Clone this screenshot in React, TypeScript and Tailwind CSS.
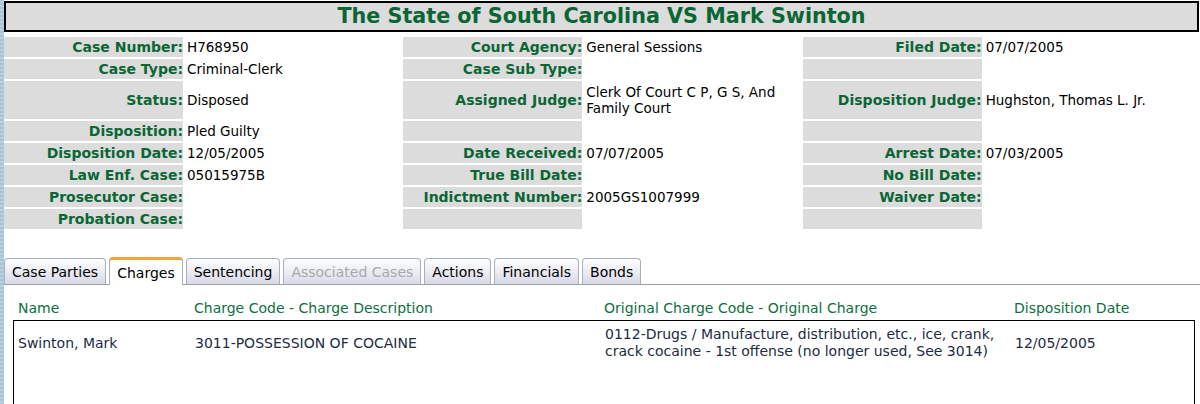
const font = "font-['DejaVu_Sans','Verdana',sans-serif]"

type Cell = { label?: string; value?: string }

const rows: { h: string; cells: Cell[] }[] = [
  { h: "h-[20px]", cells: [{ label: "Case Number:", value: "H768950" }, { label: "Court Agency:", value: "General Sessions" }, { label: "Filed Date:", value: "07/07/2005" }] },
  { h: "h-[20px]", cells: [{ label: "Case Type:", value: "Criminal-Clerk" }, { label: "Case Sub Type:" }, {}] },
  { h: "h-[38px]", cells: [{ label: "Status:", value: "Disposed" }, { label: "Assigned Judge:", value: "Clerk Of Court C P, G S, And Family Court" }, { label: "Disposition Judge:", value: "Hughston, Thomas L. Jr." }] },
  { h: "h-[20px]", cells: [{ label: "Disposition:", value: "Pled Guilty" }, {}, {}] },
  { h: "h-[20px]", cells: [{ label: "Disposition Date:", value: "12/05/2005" }, { label: "Date Received:", value: "07/07/2005" }, { label: "Arrest Date:", value: "07/03/2005" }] },
  { h: "h-[20px]", cells: [{ label: "Law Enf. Case:", value: "05015975B" }, { label: "True Bill Date:" }, { label: "No Bill Date:" }] },
  { h: "h-[20px]", cells: [{ label: "Prosecutor Case:" }, { label: "Indictment Number:", value: "2005GS1007999" }, { label: "Waiver Date:" }] },
  { h: "h-[20px]", cells: [{ label: "Probation Case:" }, {}, {}] },
]

const tabs = ["Case Parties", "Charges", "Sentencing", "Associated Cases", "Actions", "Financials", "Bonds"]

export default function App() {
  return (
    <div className={`flex w-[1200px] h-[404px] overflow-hidden bg-[#a9c3d6] ${font}`}>
      <div className="w-[4px] shrink-0 bg-[repeating-linear-gradient(0deg,#9fbcd2_0px,#c4d7e5_2px,#9fbcd2_4px)]" />
      <div className="flex-1 bg-white">
        {/* title */}
        <div className="mt-[1px] mr-[1px] h-[31px] border-2 border-black bg-[#dcdcdc] flex items-center justify-center">
          <h1 className="text-[20.7px] font-bold text-[#0b6636] leading-none">The State of South Carolina VS Mark Swinton</h1>
        </div>

        {/* case details */}
        <div className="mt-[5px] grid grid-cols-[179px_1fr_179px_1fr_179px_1fr] gap-[2px]">
          {rows.map((r, i) =>
            r.cells.map((c, j) => [
              <div key={`l${i}${j}`} className={`${r.h} bg-[#dcdcdc] flex items-center justify-end text-[14px] font-bold text-[#0b6636] whitespace-nowrap`}>
                {c.label}
              </div>,
              <div key={`v${i}${j}`} className={`${r.h} flex items-center pl-[2px] pr-[7px] text-[13.5px] leading-[16px] text-black`}>
                {c.value}
              </div>,
            ])
          )}
        </div>

        {/* tabs */}
        <div className="mt-[28px] flex items-end gap-[3px] border-b border-[#9aa0a6] h-[28px]">
          {tabs.map((t) =>
            t === "Charges" ? (
              <div key={t} className="h-[28px] -mb-px px-[7px] pt-[1px] flex items-center bg-white border border-b-0 border-[#a7b0bd] border-t-[3px] border-t-[#f2a33a] rounded-t-[4px] text-[14px] text-black">
                {t}
              </div>
            ) : (
              <div key={t} className={`h-[26px] px-[7px] pt-[1px] flex items-center bg-gradient-to-b from-white to-[#d9d9e7] border border-b-0 border-[#a7b0bd] rounded-t-[4px] text-[14px] ${t === "Associated Cases" ? "text-[#a8a8a8]" : "text-black"}`}>
                {t}
              </div>
            )
          )}
        </div>

        {/* charges */}
        <div className="pl-[9px] pr-[5px] text-[14px]">
          <div className="mt-[14px] grid grid-cols-[176px_410px_410px_1fr] pl-[5px] text-[#0e7040] leading-[18px]">
            <div>Name</div>
            <div>Charge Code - Charge Description</div>
            <div>Original Charge Code - Original Charge</div>
            <div>Disposition Date</div>
          </div>
          <div className="mt-[3px] h-[120px] border border-black grid grid-cols-[177px_410px_410px_1fr] pl-[4px] pt-[5px] items-center content-start text-[#1d2b45] leading-[17px]">
            <div>Swinton, Mark</div>
            <div>3011-POSSESSION OF COCAINE</div>
            <div className="pr-[4px]">0112-Drugs / Manufacture, distribution, etc., ice, crank, crack cocaine - 1st offense (no longer used, See 3014)</div>
            <div>12/05/2005</div>
          </div>
        </div>
      </div>
    </div>
  )
}
